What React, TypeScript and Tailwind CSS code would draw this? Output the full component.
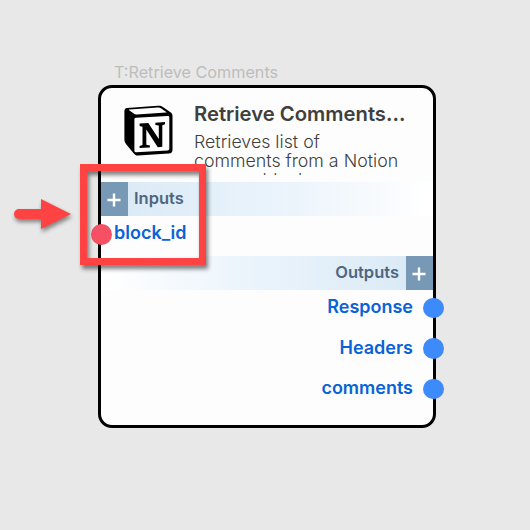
import React from "react";

const outputs = ["Response", "Headers", "comments"];

function NotionLogo() {
  return (
    <svg viewBox="0 0 49 51" className="h-[51px] w-[49px] shrink-0">
      <path
        d="M3 3.1 33.5.8c2.6-.2 3.7 0 5.400 1.200l7.200 5c1.700 1.200 2.400 1.900 2.400 4.100v33.300c0 2.600-.9 4-3.800 4.200L14.200 50.500c-2 .1-3-.2-4.200-1.700L2.200 39.200C1 37.600.4 36.400.4 34.600V6.300C.4 4.500 1.300 3.200 3 3.100Z"
        fill="#000"
      />
      <path
        d="M5.400 4.500 33.900 2.500c1.400-.1 2 0 3 .7l5.400 3.700c.5.4.3.600-.3.700L12.800 9.400c-1.400.1-1.800 0-2.700-.7L5.200 5.200c-.5-.4-.3-.7.2-.7Z"
        fill="#fdfdfd"
      />
      <path
        d="M12 12.800 43.600 11c1.100-.1 1.700.4 1.700 1.500v31c0 1.200-.4 1.800-1.700 1.900L12.100 47.200c-1.100.1-1.700-.4-1.700-1.600V14.500c0-1.100.4-1.600 1.600-1.700Z"
        fill="#fdfdfd"
      />
      <path
        d="M15.600 18.500 24.300 17.900 34.800 34V20.500L31.400 19.900V17.700L41 17.100V19.300L38.300 20.200V41.700L33.800 42.200 22.300 24.600V39.700L25.900 40.500V42.500L15.600 43.100V41L18.500 40.100V21.700L15.600 20.900Z"
        fill="#000"
      />
    </svg>
  );
}

function PlusTile() {
  return (
    <div className="flex h-[34px] w-[27px] shrink-0 items-center justify-center bg-[#7799b5]">
      <svg viewBox="0 0 14 14" className="mt-[2px] mr-px h-[14px] w-[14px]">
        <path d="M7 0.500V13.500M0.500 7H13.500" stroke="#fff" strokeWidth="2.400" />
      </svg>
    </div>
  );
}

export default function App() {
  return (
    <div className="relative h-[530px] w-[530px] overflow-hidden bg-[#e8e8e8] pt-[62px] pl-[98px] font-['Inter',sans-serif]">
      <div className="h-[23px] pl-4 text-[16.200px] leading-[20px] whitespace-nowrap text-[#bdbdbd]">T:Retrieve Comments</div>
      <div className="flex h-[343px] w-[338px] flex-col rounded-[14px] border-[3px] border-black bg-[#fdfdfd]">
        <div className="flex h-[94px] shrink-0 pt-[17px] pl-[23px]">
          <NotionLogo />
          <div className="ml-[21px] h-[70px] w-[220px] overflow-hidden text-[#3f3f3f]">
            <h1 className="-mt-[5px] h-[27px] text-[20.250px] leading-[27px] font-semibold whitespace-nowrap">Retrieve Comments...</h1>
            <p className="mt-[5px] text-[17.800px] leading-[19px] font-light whitespace-nowrap">
              Retrieves list of
              <br />
              comments from a Notion
              <br />
              page or block.
            </p>
          </div>
        </div>
        <div className="flex h-[34px] shrink-0 bg-linear-to-r from-[#d8e9f5] via-[#edf5fc] via-60% to-white">
          <PlusTile />
          <span className="ml-[6px] text-[16.500px] leading-[33px] font-semibold text-[#4f6580]">Inputs</span>
        </div>
        <div className="relative h-[40px] shrink-0 pl-[13px] text-[18px] leading-[34px] font-semibold text-[#0b62d6]">
          block_id
          <span className="absolute top-[8px] -left-[10px] h-[20.500px] w-[20.500px] rounded-full bg-[#f55064]" />
        </div>
        <div className="flex h-[34px] shrink-0 justify-end bg-linear-to-l from-[#d8e9f5] via-[#edf5fc] via-60% to-white">
          <span className="mr-[7px] text-[16.500px] leading-[33px] font-semibold text-[#4f6580]">Outputs</span>
          <PlusTile />
        </div>
        {outputs.map((name) => (
          <div key={name} className="relative h-[40.500px] shrink-0 pr-[20px] text-right text-[18px] leading-[34px] font-semibold text-[#0b62d6]">
            {name}
            <span className="absolute top-[7.500px] -right-[10.500px] h-[20.500px] w-[20.500px] rounded-full bg-[#3d8bfb]" />
          </div>
        ))}
      </div>
      <div className="absolute top-[164px] left-[80px] h-[101px] w-[126px] border-[7px] border-[#ff4343] drop-shadow-[2px_4px_2px_rgba(0,0,0,0.5)]" />
      <svg viewBox="0 0 60 34" className="absolute top-[197px] left-[13px] h-[34px] w-[60px] overflow-visible drop-shadow-[1px_3px_2px_rgba(0,0,0,0.45)]">
        <path d="M6 17H34" stroke="#ff4343" strokeWidth="10" strokeLinecap="round" />
        <path d="M28 2 58 17 28 32Z" fill="#ff4343" />
      </svg>
    </div>
  );
}
